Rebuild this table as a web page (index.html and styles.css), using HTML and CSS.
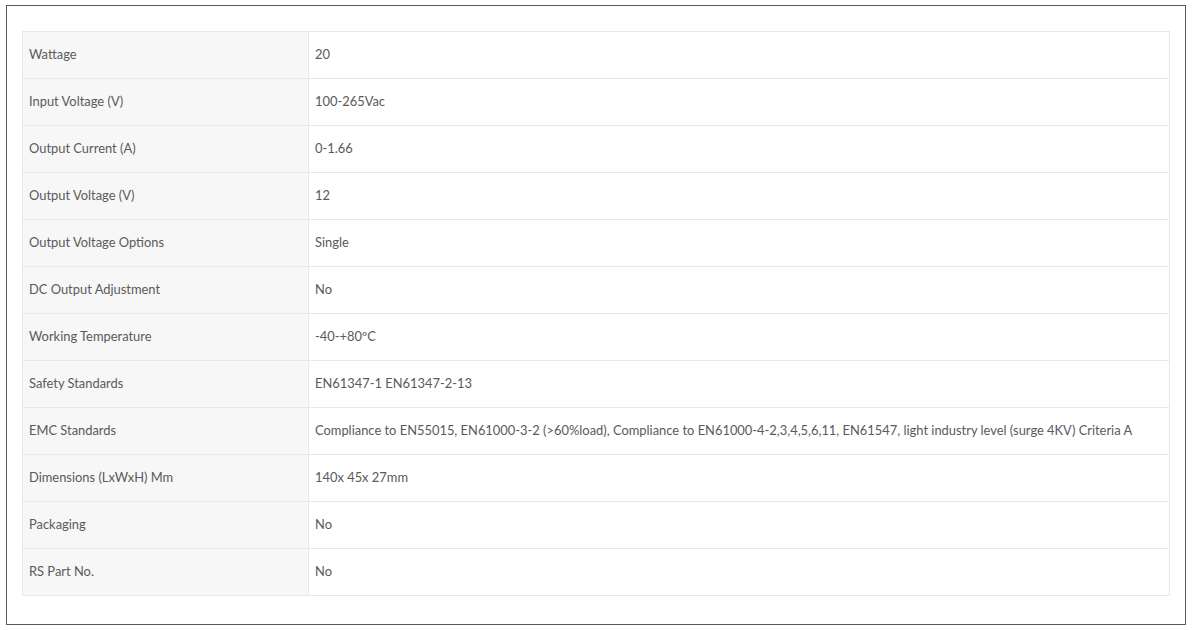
FILE: index.html
```html
<!DOCTYPE html>
<html>
<head>
<meta charset="utf-8">
<link rel="stylesheet" href="styles.css">
</head>
<body>
<div class="box">
<table class="specs">
<tr><td class="k">Wattage</td><td class="v">20</td></tr>
<tr><td class="k">Input Voltage (V)</td><td class="v">100-265Vac</td></tr>
<tr><td class="k">Output Current (A)</td><td class="v">0-1.66</td></tr>
<tr><td class="k">Output Voltage (V)</td><td class="v">12</td></tr>
<tr><td class="k">Output Voltage Options</td><td class="v">Single</td></tr>
<tr><td class="k">DC Output Adjustment</td><td class="v">No</td></tr>
<tr><td class="k">Working Temperature</td><td class="v">-40-+80ºC</td></tr>
<tr><td class="k">Safety Standards</td><td class="v">EN61347-1 EN61347-2-13</td></tr>
<tr><td class="k">EMC Standards</td><td class="v">Compliance to EN55015, EN61000-3-2 (&gt;60%load), Compliance to EN61000-4-2,3,4,5,6,11, EN61547, light industry level (surge 4KV) Criteria A</td></tr>
<tr><td class="k">Dimensions (LxWxH) Mm</td><td class="v">140x 45x 27mm</td></tr>
<tr><td class="k">Packaging</td><td class="v">No</td></tr>
<tr><td class="k">RS Part No.</td><td class="v">No</td></tr>
</table>
</div>
</body>
</html>
```
FILE: styles.css
```css
html, body {
  margin: 0;
  padding: 0;
  background: #ffffff;
}
body {
  padding: 5px 0 0 6px;
  font-family: Lato, "Open Sans", sans-serif;
  font-size: 12.9px;
  color: #5a5a5a;
}
.box {
  width: 1148px;
  height: 565px;
  border: 1px solid #5a5a5a;
  padding: 25px 15px 28px 15px;
}
.specs {
  width: 1148px;
  border-collapse: collapse;
  table-layout: fixed;
}
.specs td {
  border: 1px solid #e8e8e8;
  height: 46px;
  padding: 0 0 2px 6px;
  box-sizing: border-box;
  vertical-align: middle;
  line-height: 16px;
}
.specs tr {
  height: 47px;
}
.specs td.k {
  width: 286px;
  background: #f7f7f7;
}
.specs td.v {
  background: #ffffff;
}
```
